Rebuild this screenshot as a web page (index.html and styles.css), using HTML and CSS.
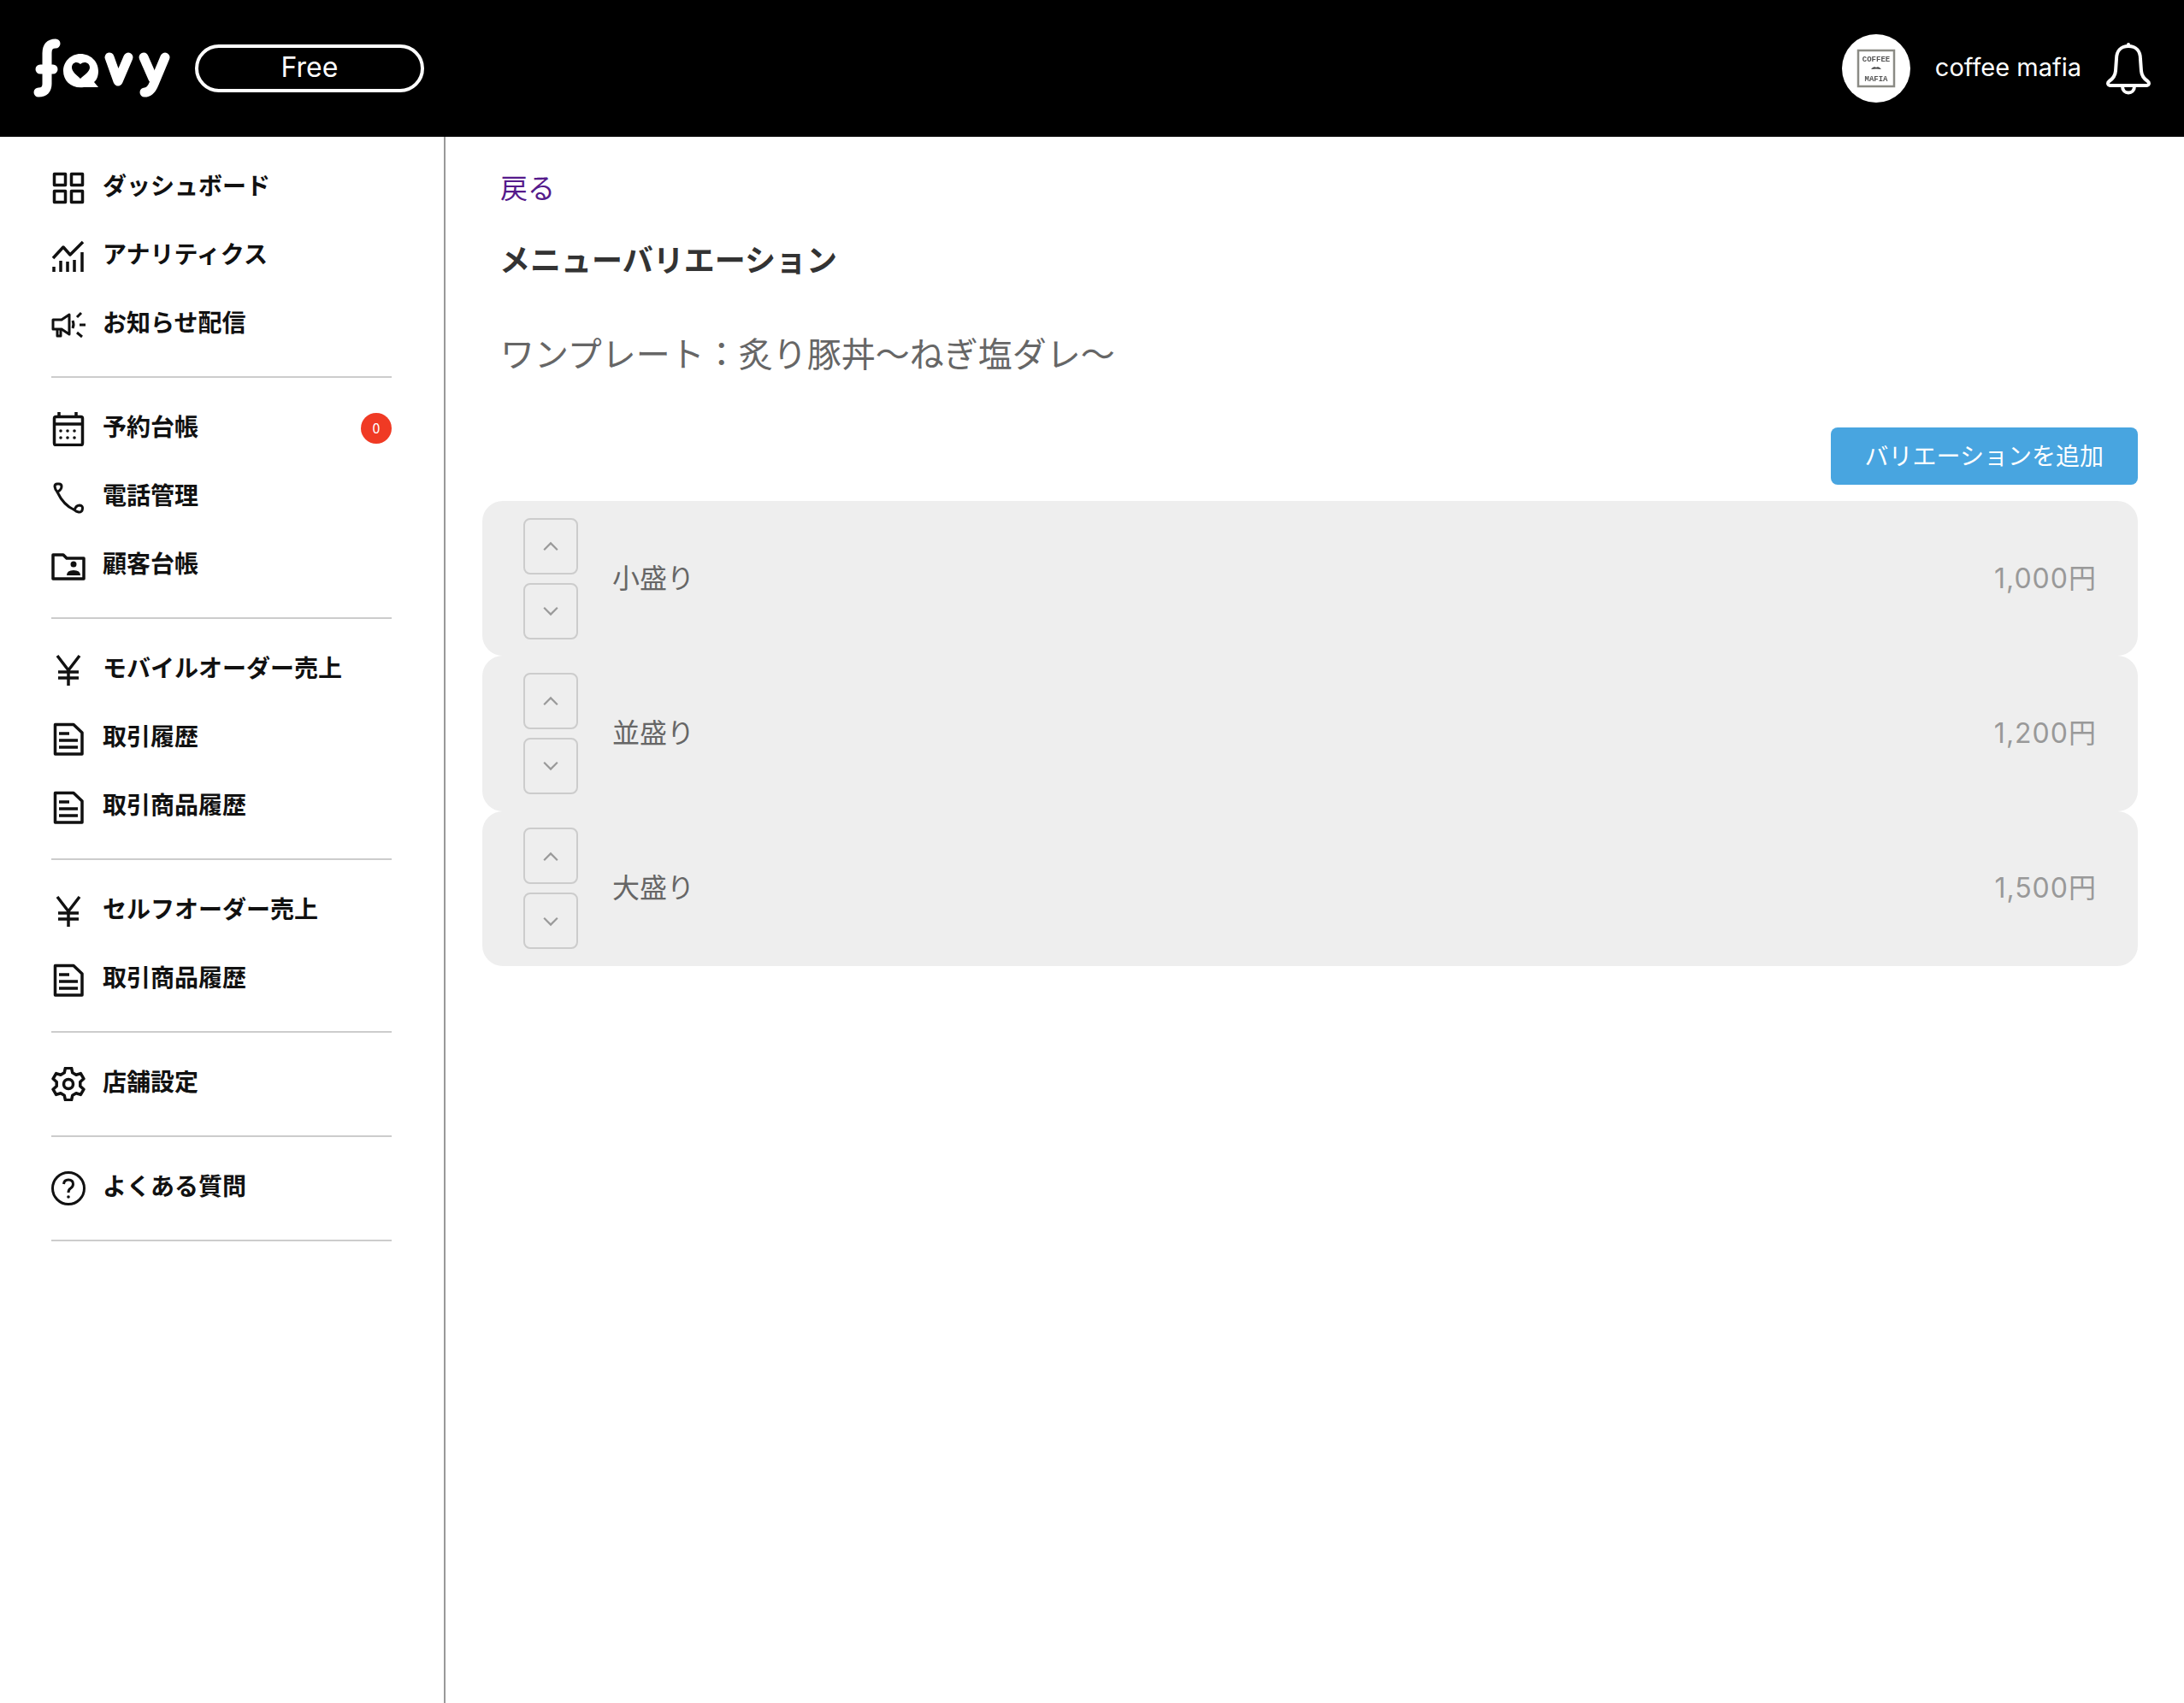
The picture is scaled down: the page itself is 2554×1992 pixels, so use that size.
FILE: index.html
```html
<!DOCTYPE html>
<html lang="ja">

<head>
    <title>メニューバリエーション</title>
    <meta charset="utf-8">
    <link rel="stylesheet" href="styles.css">
</head>

<body>
    <header class="top_bar">
        <div class="top_left">
            <svg class="logo" viewBox="0 0 170 88" aria-label="favy">
                <g fill="none" stroke="#fff" stroke-width="11" stroke-linecap="round" stroke-linejoin="round">
                    <path d="M35 15 Q25 15 25 26 L25 62 Q25 72 15 72"/>
                    <path d="M17 45 L32 45"/>
                    <path d="M98 31 L108 59 L120 31"/>
                    <path d="M138 31 L149 56"/>
                    <path d="M163 31 L150 62 Q146 72 139 72"/>
                </g>
                <path fill="#fff" fill-rule="evenodd" d="M64 27 C76 27 85 36 85 47 C85 53 83 58 80 60 L85 66 L68 66 C54 68 44 59 44 47 C44 36 53 27 64 27 Z M64 39 C60 35 54 37 54 43 C54 48 60 52 64 56 C68 52 75 48 75 43 C75 37 68 35 64 39 Z"/>
            </svg>
            <div class="plan_pill">Free</div>
        </div>
        <div class="top_right">
            <svg class="avatar" viewBox="0 0 80 80">
                <circle cx="40" cy="40" r="40" fill="#fff"/>
                <rect x="19" y="19" width="42" height="42" fill="none" stroke="#8b8b85" stroke-width="2.500"/>
                <text class="avatar_text" x="40" y="32" text-anchor="middle">COFFEE</text>
                <path d="M34 41 Q37 37 40 39 Q43 37 46 41 Q40 40 34 41 Z" fill="#444"/>
                <text class="avatar_text" x="40" y="55" text-anchor="middle">MAFIA</text>
            </svg>
            <span class="shop_name">coffee mafia</span>
            <svg class="bell" viewBox="0 0 52 62">
                <g fill="none" stroke="#fff" stroke-width="4" stroke-linecap="round" stroke-linejoin="round">
                    <path d="M26 5 C17 5 12 11 12 20 L11 34 C10.5 40 8 43 3.5 46 C1 48 2 51 5 51 L47 51 C50 51 51 48 48.5 46 C44 43 41.5 40 41 34 L40 20 C40 11 35 5 26 5 Z"/>
                    <path d="M26 3 L26 5"/>
                    <path d="M19 52 C19 62 33 62 33 52"/>
                </g>
            </svg>
        </div>
    </header>

    <div class="page_body">
        <nav class="side_nav">
            <div class="nav_group">
                <a class="nav_row">
                    <svg class="nav_icon" viewBox="0 0 40 40"><rect x="3.500" y="3.500" width="13" height="13"/><rect x="23.500" y="3.500" width="13" height="13"/><rect x="3.500" y="23.500" width="13" height="13"/><rect x="23.500" y="23.500" width="13" height="13"/></svg>
                    <span>ダッシュボード</span>
                </a>
                <a class="nav_row">
                    <svg class="nav_icon" viewBox="0 0 40 40"><path d="M2 22 L14 9 L22 18 L37 3"/><path d="M3 32 V38 M11 25 V38 M19 26 V38 M27 24 V38 M36 15 V38"/></svg>
                    <span>アナリティクス</span>
                </a>
                <a class="nav_row">
                    <svg class="nav_icon nav_icon_thin" viewBox="0 0 40 40"><path d="M2 14 L12 14 L21 8 L21 31 L12 25 L2 25 Z"/><path d="M7 25 V33 H11 V26"/><path d="M25 15 Q27 19.500 25 24"/><path d="M33 20 H40 M30 11 L35 6 M30 29 L36 34"/></svg>
                    <span>お知らせ配信</span>
                </a>
            </div>
            <div class="nav_group">
                <a class="nav_row">
                    <svg class="nav_icon" viewBox="0 0 40 40"><rect x="3.500" y="5.500" width="33" height="33" rx="2"/><path d="M3.500 14 H36.500 M9 0 V5 M29 0 V5"/><g class="icon_dots"><circle cx="11" cy="22" r="1.800"/><circle cx="19" cy="22" r="1.800"/><circle cx="27" cy="22" r="1.800"/><circle cx="11" cy="30" r="1.800"/><circle cx="19" cy="30" r="1.800"/><circle cx="27" cy="30" r="1.800"/></g></svg>
                    <span>予約台帳</span>
                    <span class="nav_badge">0</span>
                </a>
                <a class="nav_row">
                    <svg class="nav_icon nav_icon_thin" viewBox="0 0 40 40"><path d="M4 7 Q4 4 7 4 L9 4 Q12 4 12 7 Q12 11 7 13.500 Q4.500 11 4 7 Z"/><path d="M7 13.500 C12 24 19 31 27 34.500"/><path d="M27 34.500 Q29 29 33 29 Q37 29.500 36.500 33 Q36 37.500 32 37 Q29 36.500 27 34.500 Z"/></svg>
                    <span>電話管理</span>
                </a>
                <a class="nav_row">
                    <svg class="nav_icon" viewBox="0 0 40 40"><path d="M2 7 H14 L18 11 H38 V35 H2 Z"/><circle class="icon_dots" cx="26" cy="18" r="3.500"/><path class="icon_dots" d="M18 31 Q18 25 26 25 Q34 25 34 31 Z"/></svg>
                    <span>顧客台帳</span>
                </a>
            </div>
            <div class="nav_group">
                <a class="nav_row">
                    <svg class="nav_icon" viewBox="0 0 40 40"><path d="M7 3 L20 20 L33 3 M20 20 V38 M8 22 H32 M8 29 H32"/></svg>
                    <span>モバイルオーダー売上</span>
                </a>
                <a class="nav_row">
                    <svg class="nav_icon" viewBox="0 0 40 40"><path d="M26 3.500 H4.500 V38 H36 V13 Z"/><path d="M9 14 H21 M9 22 H31 M9 30 H31"/></svg>
                    <span>取引履歴</span>
                </a>
                <a class="nav_row">
                    <svg class="nav_icon" viewBox="0 0 40 40"><path d="M26 3.500 H4.500 V38 H36 V13 Z"/><path d="M9 14 H21 M9 22 H31 M9 30 H31"/></svg>
                    <span>取引商品履歴</span>
                </a>
            </div>
            <div class="nav_group">
                <a class="nav_row">
                    <svg class="nav_icon" viewBox="0 0 40 40"><path d="M7 3 L20 20 L33 3 M20 20 V38 M8 22 H32 M8 29 H32"/></svg>
                    <span>セルフオーダー売上</span>
                </a>
                <a class="nav_row">
                    <svg class="nav_icon" viewBox="0 0 40 40"><path d="M26 3.500 H4.500 V38 H36 V13 Z"/><path d="M9 14 H21 M9 22 H31 M9 30 H31"/></svg>
                    <span>取引商品履歴</span>
                </a>
            </div>
            <div class="nav_group">
                <a class="nav_row">
                    <svg class="nav_icon" viewBox="0 0 40 40"><path d="M15.200 6.840 L16.400 1.350 L23.600 1.350 L24.800 6.840 L29 9.260 L34.350 7.550 L37.950 13.790 L33.800 17.580 L33.800 22.420 L37.950 26.210 L34.350 32.450 L29 30.740 L24.800 33.160 L23.600 38.650 L16.400 38.650 L15.200 33.160 L11 30.740 L5.650 32.450 L2.050 26.210 L6.200 22.420 L6.200 17.580 L2.050 13.790 L5.650 7.550 L11 9.260 Z"/><circle cx="20" cy="20" r="5.500"/></svg>
                    <span>店舗設定</span>
                </a>
            </div>
            <div class="nav_group">
                <a class="nav_row">
                    <svg class="nav_icon nav_icon_thin" viewBox="0 0 40 40"><circle cx="20" cy="20" r="18.500"/><path d="M14.500 15 Q15 10 20 10 Q25.500 10 25.500 15 Q25.500 18 22.500 20 Q20 21.500 20 25"/><circle class="icon_dots" cx="20" cy="30" r="1.800"/></svg>
                    <span>よくある質問</span>
                </a>
            </div>
        </nav>

        <main class="content_container">
            <div class="heading_block">
                <a class="back_link" href="#">戻る</a>
                <h1>メニューバリエーション</h1>
                <h2>ワンプレート：炙り豚丼〜ねぎ塩ダレ〜</h2>
            </div>
            <div class="add_row">
                <button class="add_button" type="button">バリエーションを追加</button>
            </div>
            <div class="variation_list">
                <div class="variation_card">
                    <div class="order_buttons">
                        <button class="order_button" type="button"><svg viewBox="0 0 16 10"><path d="M1.500 8.500 L8 2 L14.500 8.500"/></svg></button>
                        <button class="order_button" type="button"><svg viewBox="0 0 16 10"><path d="M1.500 1.500 L8 8 L14.500 1.500"/></svg></button>
                    </div>
                    <span class="variation_name">小盛り</span>
                    <span class="variation_price">1,000円</span>
                </div>
                <div class="variation_card">
                    <div class="order_buttons">
                        <button class="order_button" type="button"><svg viewBox="0 0 16 10"><path d="M1.500 8.500 L8 2 L14.500 8.500"/></svg></button>
                        <button class="order_button" type="button"><svg viewBox="0 0 16 10"><path d="M1.500 1.500 L8 8 L14.500 1.500"/></svg></button>
                    </div>
                    <span class="variation_name">並盛り</span>
                    <span class="variation_price">1,200円</span>
                </div>
                <div class="variation_card">
                    <div class="order_buttons">
                        <button class="order_button" type="button"><svg viewBox="0 0 16 10"><path d="M1.500 8.500 L8 2 L14.500 8.500"/></svg></button>
                        <button class="order_button" type="button"><svg viewBox="0 0 16 10"><path d="M1.500 1.500 L8 8 L14.500 1.500"/></svg></button>
                    </div>
                    <span class="variation_name">大盛り</span>
                    <span class="variation_price">1,500円</span>
                </div>
            </div>
        </main>
    </div>
</body>

</html>
```

FILE: styles.css
```css
:root {
    --top_height: 160px;
    --side_width: 521px;
    --jp_font: "Noto Sans CJK JP", "Noto Sans", sans-serif;
    --latin_font: Inter, "Noto Sans CJK JP", sans-serif;
}

body {
    margin: 0px;
    background: white;
    font-family: var(--jp_font);
    color: #333;
}

.top_bar {
    height: var(--top_height);
    background: black;
    color: white;
    display: flex;
    justify-content: space-between;
    align-items: center;
    padding: 0 39px 0 30px;
}

.top_left,
.top_right {
    display: flex;
    align-items: center;
}

.logo {
    width: 170px;
    height: 88px;
}

.plan_pill {
    box-sizing: border-box;
    width: 268px;
    height: 56px;
    margin-left: 28px;
    border: 4px solid white;
    border-radius: 28px;
    font-family: var(--latin_font);
    font-size: 32px;
    line-height: 46px;
    text-align: center;
}

.avatar {
    width: 80px;
    height: 80px;
    filter: blur(0.4px);
}

.avatar_text {
    font-family: "Liberation Mono", monospace;
    font-size: 9px;
    font-weight: bold;
    fill: #555;
}

.shop_name {
    margin-left: 29px;
    padding-bottom: 3px;
    font-family: var(--latin_font);
    font-size: 29px;
}

.bell {
    width: 52px;
    height: 62px;
    margin-left: 29px;
}

.page_body {
    display: flex;
    min-height: calc(100vh - var(--top_height));
}

.side_nav {
    box-sizing: border-box;
    flex: 0 0 var(--side_width);
    padding: 0 61px 0 60px;
    border-right: 2px solid #999;
}

.nav_group {
    padding: 20px 0;
    border-bottom: 2px solid #ccc;
}

.nav_row {
    height: 80px;
    display: flex;
    align-items: center;
    gap: 20px;
    font-size: 28px;
    font-weight: bold;
    color: #111;
}

.nav_row span {
    padding-bottom: 8px;
}

.nav_icon {
    flex: 0 0 40px;
    width: 40px;
    height: 40px;
    fill: none;
    stroke: #111;
    stroke-width: 3.5;
    stroke-linejoin: round;
}

.nav_icon_thin {
    stroke-width: 3;
}

.icon_dots {
    fill: #111;
    stroke: none;
}

.nav_row .nav_badge {
    width: 36px;
    height: 36px;
    margin: 0 0 3px auto;
    padding: 0;
    border-radius: 50%;
    background: #f03a24;
    color: white;
    font-size: 16px;
    font-weight: normal;
    line-height: 34px;
    text-align: center;
}

.content_container {
    flex: 1;
    padding: 38px 54px 0 43px;
}

.heading_block {
    padding-left: 21px;
}

.back_link {
    display: block;
    font-size: 32px;
    line-height: 40px;
    color: #551a8b;
    text-decoration: none;
}

h1 {
    margin: 42px 0 0 -1px;
    font-size: 36px;
    line-height: 44px;
    font-weight: bold;
    color: #333;
}

h2 {
    margin: 60px 0 0;
    font-size: 40px;
    line-height: 56px;
    font-weight: normal;
    color: #666;
}

.add_row {
    display: flex;
    justify-content: flex-end;
    margin-top: 60px;
}

.add_button {
    height: 67px;
    padding: 0 40px 3px;
    border: 0;
    border-radius: 8px;
    background: #48a5e0;
    color: white;
    font-family: var(--jp_font);
    font-size: 28px;
}

.variation_list {
    margin-top: 19px;
}

.variation_card {
    box-sizing: border-box;
    height: 181.3px;
    display: flex;
    align-items: center;
    padding: 0 48px;
    border-radius: 24px;
    background: #eee;
}

.order_buttons {
    display: flex;
    flex-direction: column;
    gap: 10px;
}

.order_button {
    box-sizing: border-box;
    width: 64px;
    height: 66px;
    padding: 4px 0 0;
    border: 2px solid #ccc;
    border-radius: 8px;
    background: transparent;
}

.order_button svg {
    width: 20px;
    height: 12px;
    fill: none;
    stroke: #999;
    stroke-width: 1.8;
}

.variation_name {
    margin-left: 40px;
    padding-bottom: 6px;
    font-size: 32px;
    color: #666;
}

.variation_price {
    margin-left: auto;
    padding-bottom: 6px;
    font-family: var(--latin_font);
    font-size: 32px;
    letter-spacing: 1px;
    color: #999;
}
```
